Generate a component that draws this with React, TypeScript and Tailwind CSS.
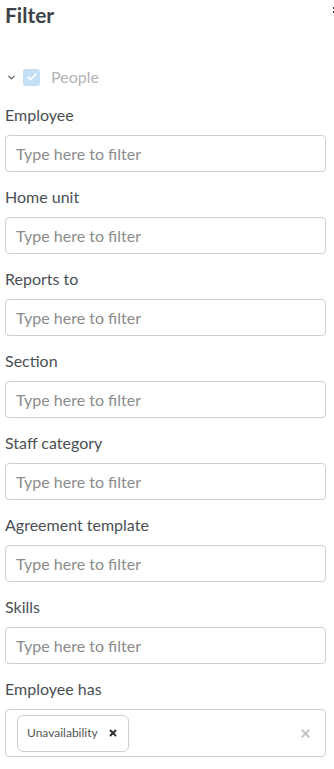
import { ChevronDown, Check, X } from 'lucide-react'

const fields = [
  'Employee',
  'Home unit',
  'Reports to',
  'Section',
  'Staff category',
  'Agreement template',
  'Skills',
]

export default function App() {
  return (
    <div className="relative w-[334px] min-h-[769px] bg-white px-[5px] font-['Lato','Noto_Sans',sans-serif] overflow-hidden">
      {/* Header */}
      <div className="h-[28px] flex items-center">
        <h1 className="text-[21px] font-bold text-[#3d4247] leading-none">Filter</h1>
      </div>
      <div className="absolute right-0 top-[7px] flex flex-col gap-[2px]">
        <span className="w-[1px] h-[2px] bg-[#333]" />
        <span className="w-[1px] h-[2px] bg-[#333]" />
      </div>

      {/* Group toggle */}
      <div className="mt-[39px] h-[20px] flex items-center">
        <ChevronDown className="w-[11px] h-[11px] ml-[1px] text-[#555]" strokeWidth={2.5} />
        <div className="ml-[6px] w-[17px] h-[17px] rounded-[3px] bg-[#c4def3] flex items-center justify-center">
          <Check className="w-[12px] h-[12px] text-white" strokeWidth={3.5} />
        </div>
        <span className="ml-[11px] text-[16px] text-[#b3b3b3]">People</span>
      </div>

      {/* Fields */}
      <div className="mt-[18px] flex flex-col">
        {fields.map((label) => (
          <div key={label} className="mb-[15px]">
            <div className="h-[19px] flex items-center text-[16px] text-[#4a5055]">{label}</div>
            <input
              placeholder="Type here to filter"
              className="mt-[11px] w-[321px] h-[37px] rounded-[4px] border border-[#cfcfcf] px-[10px] text-[16px] text-[#333] placeholder:text-[#8c8c8c] outline-none font-['Lato','Noto_Sans',sans-serif]"
            />
          </div>
        ))}

        <div>
          <div className="h-[19px] flex items-center text-[16px] text-[#4a5055]">Employee has</div>
          <div className="mt-[11px] w-[321px] h-[48px] rounded-[4px] border border-[#cfcfcf] flex items-center pl-[11px] pr-[13px]">
            <div className="h-[37px] rounded-[6px] border border-[#cfcfcf] flex items-center pl-[9px] pr-[10px] gap-[10px]">
              <span className="text-[12px] text-[#555]">Unavailability</span>
              <X className="w-[10px] h-[10px] text-[#333]" strokeWidth={4.5} />
            </div>
            <div className="flex-1" />
            <X className="w-[13px] h-[13px] text-[#c2c2c2]" strokeWidth={3.5} />
          </div>
        </div>
      </div>
    </div>
  )
}
